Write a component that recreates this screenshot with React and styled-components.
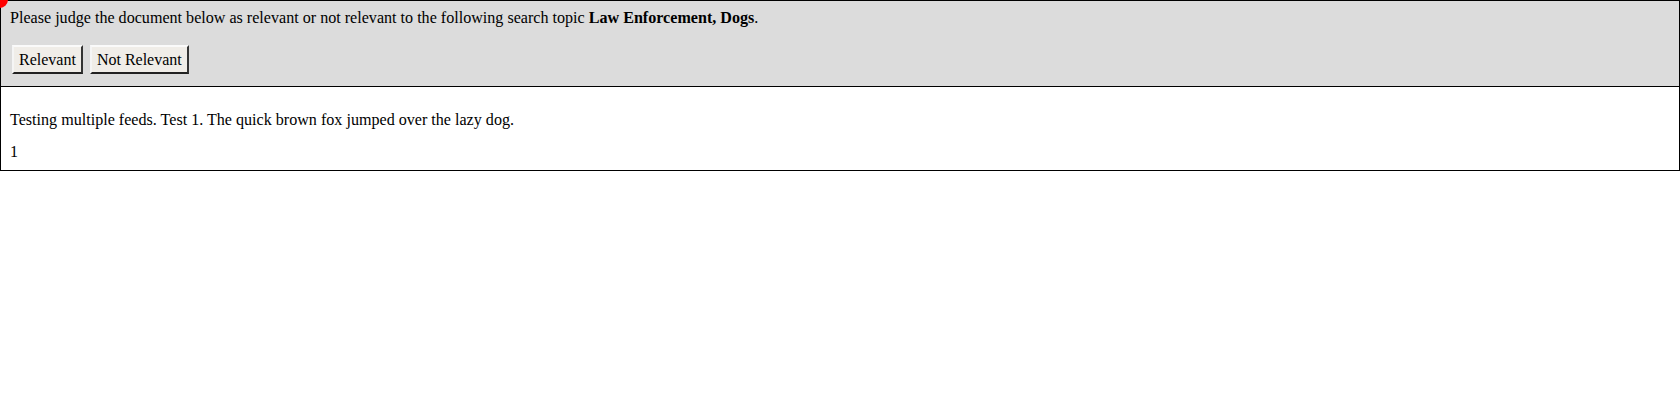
import React from "react";
import styled, { createGlobalStyle } from "styled-components";

const Global = createGlobalStyle`
  html, body { margin: 0; padding: 0; background: #fff; }
  body { font-family: "Liberation Serif", "Times New Roman", serif; font-size: 16px; color: #000; }
`;

const Page = styled.div`
  position: relative;
  width: 1680px;
  box-sizing: border-box;
`;

const Dot = styled.span`
  position: absolute;
  left: -9px;
  top: -9px;
  width: 17px;
  height: 17px;
  border-radius: 50%;
  background: #ff0000;
`;

const Header = styled.div`
  background: #dcdcdc;
  border: 1px solid #000;
  padding: 8px 9px 12px;
`;

const Prompt = styled.p`
  margin: 0;
  font-size: 16.1px;
  line-height: 18.5px;
`;

const Actions = styled.div`
  display: flex;
  gap: 7px;
  margin-top: 17px;
  padding-left: 2px;
`;

const JudgeButton = styled.button`
  font-family: "Liberation Serif", "Times New Roman", serif;
  font-size: 16px;
  line-height: 18px;
  color: #000;
  background: #f0ede8;
  border: 2px outset #d4d0c8;
  border-color: #fafafa #888 #777 #f5f5f5;
  padding: 4px 5px 3px;
  margin: 0;
  cursor: pointer;
`;

const Document = styled.div`
  border: 1px solid #000;
  border-top: none;
  padding: 10px 9px 9px;
`;

const DocText = styled.p`
  margin: 14px 0 0;
  font-size: 16.1px;
  line-height: 18px;
`;

export default function App() {
  return (
    <>
      <Global />
      <Page>
        <Dot />
        <Header>
          <Prompt>
            Please judge the document below as relevant or not relevant to the following search topic <b>Law Enforcement, Dogs</b>.
          </Prompt>
          <Actions>
            <JudgeButton>Relevant</JudgeButton>
            <JudgeButton>Not Relevant</JudgeButton>
          </Actions>
        </Header>
        <Document>
          <DocText>Testing multiple feeds. Test 1. The quick brown fox jumped over the lazy dog.</DocText>
          <DocText>1</DocText>
        </Document>
      </Page>
    </>
  );
}
